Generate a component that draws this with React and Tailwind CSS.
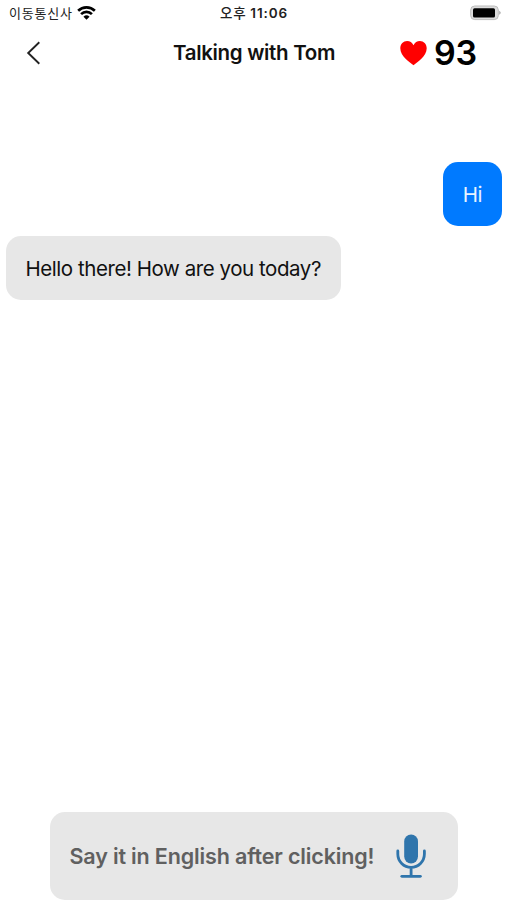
function StatusBar() {
  return (
    <div className="grid h-[26px] grid-cols-3 items-center pr-[6px] pl-[9px] text-[13px] leading-none">
      <div className="flex items-center gap-[4px] whitespace-nowrap">
        <span className="tracking-[0.8px] text-[#222]">이동통신사</span>
        <svg className="h-[14px] w-[19px]" viewBox="0 0 20 14" fill="none" stroke="#000" strokeWidth="2.8">
          <path d="M1.2 4.7a12.6 12.6 0 0 1 17.6 0" />
          <path d="M4.3 8.2a8.2 8.2 0 0 1 11.4 0" />
          <path d="M6.8 10.9a4.6 4.6 0 0 1 6.4 0L10 14z" fill="#000" stroke="none" />
        </svg>
      </div>
      <div className="pt-px pr-[2px] text-center text-[13.5px] font-semibold whitespace-nowrap text-[#222]">
        <span className="tracking-[0.6px] font-medium">오후 </span>
        <span className="tracking-[0.85px]">11:06</span>
      </div>
      <svg className="h-[16px] w-[31px] justify-self-end" viewBox="0 0 31 16">
        <rect x="0.7" y="1" width="27.6" height="13.6" rx="4" fill="#dcdcdc" stroke="#bdbdbd" />
        <rect x="3" y="3.2" width="22" height="9.3" rx="1.5" fill="#000" />
        <path d="M29.2 5.8c2 1 2 3 0 4z" fill="#aaa" />
      </svg>
    </div>
  );
}

function NavBar() {
  return (
    <header className="flex h-[53px] items-center pl-[26px]">
      <svg className="h-[24px] w-[15px]" viewBox="0 0 15 24" fill="none" stroke="#222" strokeWidth="1.9">
        <path d="M13.3 1.2 2.2 12l11.1 10.8" />
      </svg>
      <h1 className="ml-[132px] w-[227px] pt-[2px] text-[20.5px] font-semibold tracking-[-0.32px] whitespace-nowrap text-[#111]">Talking with Tom</h1>
      <svg className="h-[26px] w-[27px]" viewBox="0 0 27 26" fill="#ff0000">
        <path d="M13.5 25.2C10 22.5 0.3 16.2 0.3 8.2 0.3 3.9 3.4 1 7.1 1c2.8 0 5.2 1.6 6.4 4.2C14.7 2.6 17.1 1 19.9 1c3.7 0 6.8 2.9 6.8 7.2 0 8-9.7 14.3-13.2 17z" />
      </svg>
      <span className="ml-[7px] text-[34px] leading-none font-semibold tracking-[-0.3px]">93</span>
    </header>
  );
}

function MicIcon() {
  return (
    <svg className="h-[46px] w-[32px]" viewBox="0 0 32 46" fill="none" stroke="#2f75ac" strokeWidth="2.8" strokeLinecap="round">
      <rect x="9.2" y="1.5" width="13.8" height="29" rx="6.9" fill="#2f75ac" stroke="none" />
      <path d="M2.8 18v3a13.3 13.3 0 0 0 26.6 0V18M16.1 34.5v8" />
      <path d="M6.8 43.3h18.6" />
    </svg>
  );
}

export default function App() {
  return (
    <div className="flex h-[900px] w-[507px] flex-col overflow-hidden bg-white font-['Inter','Noto_Sans_CJK_KR',sans-serif] text-black">
      <StatusBar />
      <NavBar />
      <main className="flex flex-1 flex-col gap-[10px] pt-[83px] pr-[5px] pl-[6px]">
        <div className="flex h-[64px] w-[59px] items-center justify-center self-end rounded-[15px] bg-[#007aff] pt-[3px] text-[20.5px] tracking-[-0.3px] text-[#e8f3ff]">Hi</div>
        <div className="flex h-[64px] w-[335px] items-center rounded-[15px] bg-[#e7e7e7] pt-[3px] pl-[19.5px] text-[20.5px] tracking-[-0.44px] whitespace-nowrap text-[#111]">
          <span>Hello there! How are you today?</span>
        </div>
      </main>
      <footer className="ml-[50px] flex h-[88px] w-[408px] items-center rounded-[15px] bg-[#e7e7e7] pl-[19.5px]">
        <span className="w-[325px] text-[21.5px] font-semibold tracking-[-0.15px] whitespace-nowrap text-[#606060]">Say it in English after clicking!</span>
        <MicIcon />
      </footer>
    </div>
  );
}
